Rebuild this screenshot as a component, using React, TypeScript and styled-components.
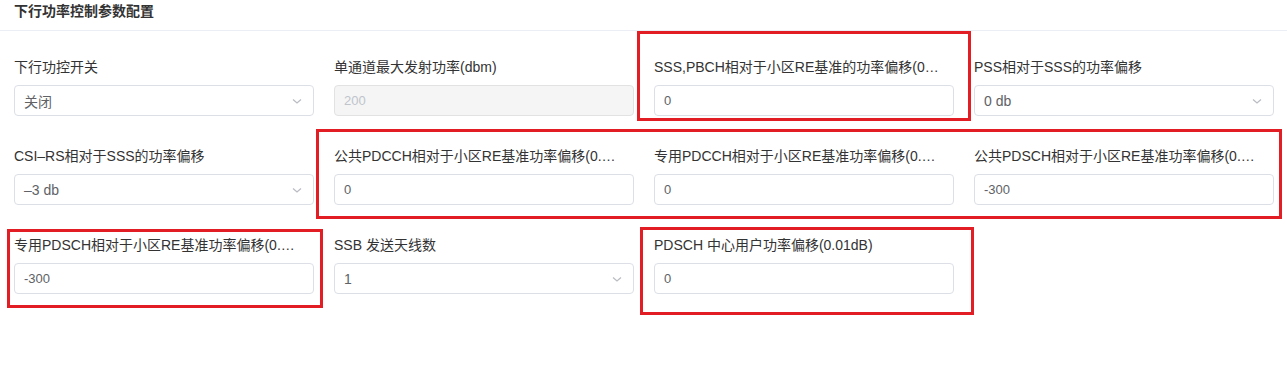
import React from "react";
import styled, { createGlobalStyle } from "styled-components";

const GlobalStyle = createGlobalStyle`
  html, body { margin: 0; padding: 0; background: #fff; }
  body { font-family: "Liberation Sans", "Noto Sans CJK SC", sans-serif; color: #333; }
  * { box-sizing: border-box; }
`;

const Page = styled.div`
  position: relative;
  width: 1287px;
  height: 384px;
  background: #fff;
`;

const Header = styled.div`
  height: 31px;
  padding: 0 14px;
  border-bottom: 1px solid #ebeef5;
  display: flex;
  align-items: flex-start;
`;

const Title = styled.h2`
  margin: 0;
  font-size: 14px;
  line-height: 22px;
  font-weight: 700;
  color: #333;
`;

const FormGrid = styled.div`
  display: grid;
  grid-template-columns: repeat(4, 300px);
  column-gap: 20px;
  row-gap: 29px;
  padding: 25px 14px 0 14px;
`;

const Field = styled.div`
  display: flex;
  flex-direction: column;
  min-width: 0;
`;

const Label = styled.label`
  font-size: 14px;
  line-height: 22px;
  height: 22px;
  color: #333;
  white-space: nowrap;
  overflow: hidden;
  text-overflow: ellipsis;
  margin-bottom: 7px;
`;

const Box = styled.div<{ $disabled?: boolean }>`
  height: 31px;
  border: 1px solid ${(p) => (p.$disabled ? "#e2e2e2" : "#dcdfe6")};
  background: ${(p) => (p.$disabled ? "#f5f5f5" : "#fff")};
  border-radius: 4px;
  display: flex;
  align-items: center;
  padding: 0 10px 0 9px;
`;

const Value = styled.span<{ $small?: boolean; $disabled?: boolean }>`
  flex: 1;
  font-size: ${(p) => (p.$small ? "13px" : "14px")};
  color: ${(p) => (p.$disabled ? "#c0c4cc" : "#606266")};
  white-space: nowrap;
`;

const Chevron = styled.svg`
  width: 12px;
  height: 12px;
  flex: none;
`;

const Mark = styled.div`
  position: absolute;
  border: 3px solid #e21d23;
  pointer-events: none;
`;

type Item = {
  label: string;
  value: string;
  kind: "select" | "input" | "disabled";
};

const items: Item[] = [
  { label: "下行功控开关", value: "关闭", kind: "select" },
  { label: "单通道最大发射功率(dbm)", value: "200", kind: "disabled" },
  { label: "SSS,PBCH相对于小区RE基准的功率偏移(0…", value: "0", kind: "input" },
  { label: "PSS相对于SSS的功率偏移", value: "0 db", kind: "select" },
  { label: "CSI–RS相对于SSS的功率偏移", value: "–3 db", kind: "select" },
  { label: "公共PDCCH相对于小区RE基准功率偏移(0.…", value: "0", kind: "input" },
  { label: "专用PDCCH相对于小区RE基准功率偏移(0.…", value: "0", kind: "input" },
  { label: "公共PDSCH相对于小区RE基准功率偏移(0.…", value: "-300", kind: "input" },
  { label: "专用PDSCH相对于小区RE基准功率偏移(0.…", value: "-300", kind: "input" },
  { label: "SSB 发送天线数", value: "1", kind: "select" },
  { label: "PDSCH 中心用户功率偏移(0.01dB)", value: "0", kind: "input" },
];

const marks = [
  { left: 637, top: 31, width: 334, height: 90 },
  { left: 316, top: 129, width: 966, height: 90 },
  { left: 7, top: 229, width: 316, height: 79 },
  { left: 640, top: 227, width: 334, height: 88 },
];

export default function App() {
  return (
    <Page>
      <GlobalStyle />
      <Header>
        <Title>下行功率控制参数配置</Title>
      </Header>
      <FormGrid>
        {items.map((it, i) => (
          <Field key={i}>
            <Label>{it.label}</Label>
            <Box $disabled={it.kind === "disabled"}>
              <Value $small={it.kind !== "select"} $disabled={it.kind === "disabled"}>
                {it.value}
              </Value>
              {it.kind === "select" && (
                <Chevron viewBox="0 0 12 12">
                  <path d="M2 4.5 L6 8 L10 4.5" fill="none" stroke="#b9bcc2" strokeWidth="1.2" />
                </Chevron>
              )}
            </Box>
          </Field>
        ))}
      </FormGrid>
      {marks.map((m, i) => (
        <Mark
          key={i}
          style={{ left: m.left, top: m.top, width: m.width, height: m.height }}
        />
      ))}
    </Page>
  );
}
